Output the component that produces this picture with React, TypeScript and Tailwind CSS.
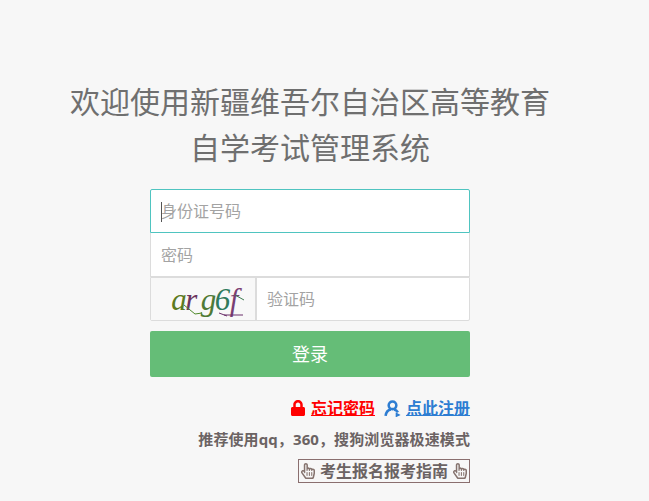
import { FaLock, FaRegHandPointer } from "react-icons/fa";

const font = { fontFamily: '"Open Sans", "Noto Sans CJK SC", sans-serif' };

function UserIcon() {
  return (
    <svg width="17" height="17" viewBox="0 0 16 16" fill="none" stroke="#2d7dd2" strokeWidth="2.4">
      <circle cx="8" cy="5" r="3.6" />
      <path d="M1.5 15c.4-3.6 2.6-5.6 5-6M9.5 9c1.6.4 2.8 1.3 3.6 2.6" />
      <path d="M11.5 12.5l3 1.6-3 1.4z" fill="#2d7dd2" strokeWidth="1" />
    </svg>
  );
}

function Captcha() {
  return (
    <div className="relative flex h-full w-[104px] shrink-0 items-center justify-center bg-[#f8f8f8]">
      <span className="pl-[2px] font-['Liberation_Serif',serif] text-[31px] leading-none italic tracking-[-1.5px]">
        <span className="text-[#5c7a1f]">a</span>
        <span className="text-[#6b3560]">r</span>
        <span className="ml-[5px] text-[#4f7a35]">g</span>
        <span className="text-[#2f7a5c]">6</span>
        <span className="ml-[1px] text-[#7a3f73]">f</span>
      </span>
      <svg className="absolute top-0 left-0" width="104" height="44" viewBox="0 0 104 44" fill="none">
        <path d="M33 27l11 9 7-1" stroke="#4f8a2a" />
        <path d="M73 37h19M68 35l8 3" stroke="#6b2f6a" />
        <path d="M84 17l9 5" stroke="#3d7a50" />
      </svg>
    </div>
  );
}

export default function App() {
  return (
    <div className="h-[501px] w-[649px] overflow-hidden bg-[#f7f7f7]" style={font}>
      <div className="w-[620px] pt-[79px]">
        <h1 className="text-center text-[30px] leading-[46px] font-normal text-[#6f6f6f]">
          欢迎使用新疆维吾尔自治区高等教育
          <br />
          自学考试管理系统
        </h1>

        <form className="mx-auto mt-[18px] w-[320px]">
          <div className="relative h-[44px] rounded-t-[2px] border border-[#4fc4c0] bg-white">
            <input
              placeholder="身份证号码"
              className="h-full w-full px-[10px] text-[16px] outline-none placeholder:text-[#a3a3a3]"
            />
            <span className="absolute top-[12px] left-[10px] h-[20px] w-px bg-[#555]" />
          </div>
          <div className="h-[44px] border-x border-b border-[#dcdcdc] bg-white">
            <input
              placeholder="密码"
              className="h-full w-full px-[10px] text-[16px] outline-none placeholder:text-[#a3a3a3]"
            />
          </div>
          <div className="flex h-[44px] rounded-b-[2px] border border-[#dcdcdc] bg-white">
            <Captcha />
            <div className="flex-1 border-l-2 border-[#dcdcdc]">
              <input
                placeholder="验证码"
                className="h-full w-full px-[10px] text-[16px] outline-none placeholder:text-[#a3a3a3]"
              />
            </div>
          </div>

          <button
            type="button"
            className="mt-[10px] h-[46px] w-full rounded-[2px] bg-[#65bd77] text-[18px] text-white"
          >
            登录
          </button>

          <div className="mt-[20px] flex items-center justify-end gap-[9px] text-[16px] leading-[22px] font-bold">
            <a className="flex items-center gap-[5px] text-[#ff0000] underline">
              <FaLock size={16} />
              忘记密码
            </a>
            <a className="flex items-center gap-[5px] text-[#2d7dd2] underline">
              <UserIcon />
              点此注册
            </a>
          </div>

          <p className="mt-[10px] text-right text-[15px] leading-[20px] font-bold tracking-[0.1px] text-[#6b6363]">
            推荐使用qq，360，搜狗浏览器极速模式
          </p>

          <div className="mt-[10px] flex justify-end">
            <a className="flex h-[24px] items-center gap-[4px] border border-[#8a6f6f] px-[1px] text-[16px] font-bold text-[#6b6363]">
              <FaRegHandPointer size={16} className="text-[#85736e]" />
              考生报名报考指南
              <FaRegHandPointer size={16} className="text-[#85736e]" />
            </a>
          </div>
        </form>
      </div>
    </div>
  );
}
